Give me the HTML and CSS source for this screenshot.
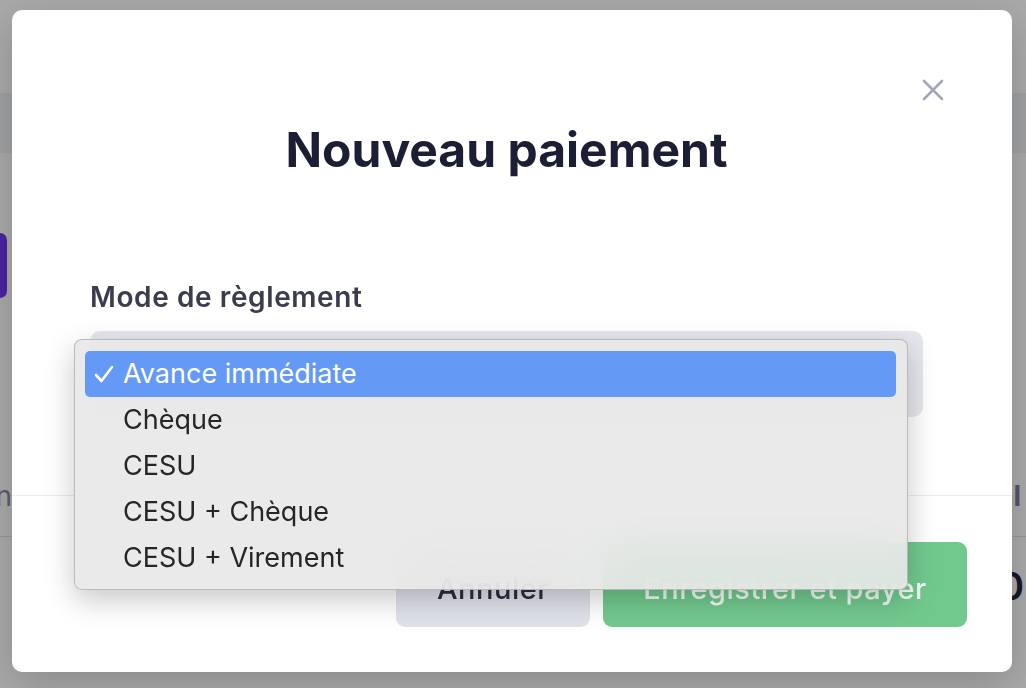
FILE: index.html
```html
<!DOCTYPE html>
<html lang="fr">

<head>
    <meta charset="UTF-8">
    <meta name="viewport" content="width=device-width, initial-scale=1.0">
    <title>Nouveau paiement</title>

    <link rel="stylesheet" href="styles.css">
</head>

<body>
    <!-- page behind the modal -->
    <div class="page">
        <div class="topbar"></div>
        <div class="band"></div>
        <div class="content">
            <div class="tab"></div>
            <div class="row head">
                <div class="cell left">Désignation</div>
                <div class="cell mid"></div>
                <div class="cell right">Total</div>
            </div>
            <div class="row">
                <div class="cell left"></div>
                <div class="cell mid"></div>
                <div class="cell right amount">100</div>
            </div>
        </div>
    </div>

    <div class="backdrop"></div>

    <div class="modal">
        <div class="modal-head">
            <button class="close" type="button" aria-label="Fermer">
                <svg width="22" height="22" viewBox="0 0 22 22">
                    <path d="M2 2 L20 20 M20 2 L2 20" stroke="#a3a7b9" stroke-width="2.6" stroke-linecap="round" fill="none" />
                </svg>
            </button>
        </div>

        <div class="modal-body">
            <h1 class="title">Nouveau paiement</h1>

            <label class="label">Mode de règlement</label>
            <div class="select-wrap">
                <div class="select"></div>

                <!-- opened native popup -->
                <ul class="popup">
                    <li class="option selected">
                        <svg class="check" width="20" height="18" viewBox="0 0 20 18">
                            <path d="M2 10 L7.5 16 L18 2" stroke="#fff" stroke-width="2.6" stroke-linecap="round" stroke-linejoin="round" fill="none" />
                        </svg>Avance immédiate
                    </li>
                    <li class="option">Chèque</li>
                    <li class="option">CESU</li>
                    <li class="option">CESU + Chèque</li>
                    <li class="option">CESU + Virement</li>
                </ul>
            </div>
        </div>

        <div class="modal-foot">
            <button class="btn btn-cancel" type="button">Annuler</button>
            <button class="btn btn-save" type="button">Enregistrer et payer</button>
        </div>
    </div>
</body>

</html>
```

FILE: styles.css
```css
* {
    padding: 0;
    margin: 0;
    box-sizing: border-box;
}

html,
body {
    height: 100%;
    overflow: hidden;
}

body {
    font-family: Inter, "Noto Sans", sans-serif;
    background: #fff;
}

/* page behind */
.page {
    height: 100%;
    background: #fff;
}

.topbar {
    height: 93px;
}

.band {
    height: 60px;
    background: #f1f2f5;
}

.content {
    padding-top: 80px;
}

.tab {
    width: 7px;
    height: 65px;
    background: #7136f2;
    border-radius: 0 10px 10px 0;
}

.row {
    display: grid;
    grid-template-columns: 12px 1fr 14px;
    height: 100px;
}

.row.head {
    margin-top: 139px;
    border-bottom: 1px solid #e2e2e8;
    align-items: center;
    padding-top: 18px;
}

.cell {
    display: flex;
    white-space: nowrap;
    overflow: hidden;
}

.cell.left {
    justify-content: flex-end;
    font-size: 28px;
    color: #8a8aa0;
}

.cell.right {
    justify-content: flex-end;
    padding-right: 5px;
    font-size: 28px;
    font-weight: 700;
    color: #80809a;
}

.cell.amount {
    padding: 26px 2px 0 0;
    font-size: 38px;
    font-weight: 600;
    color: #26263a;
}

.backdrop {
    position: fixed;
    inset: 0;
    background: rgba(0, 0, 0, 0.34);
}

/* modal */
.modal {
    position: fixed;
    top: 10px;
    left: 12px;
    width: 1000px;
    height: 662px;
    background: #fff;
    border-radius: 10px;
    box-shadow: 0 12px 40px rgba(0, 0, 0, 0.18);
    display: flex;
    flex-direction: column;
}

.modal-head {
    display: flex;
    justify-content: flex-end;
    padding: 69px 68px 0 0;
}

.close {
    display: block;
    width: 22px;
    height: 22px;
    border: 0;
    background: none;
    cursor: pointer;
}

.close svg {
    display: block;
}

.modal-body {
    padding: 21px 89px 78px 78px;
}

.title {
    font-size: 48px;
    line-height: 56px;
    font-weight: 700;
    text-align: center;
    color: #1c1f33;
}

.label {
    display: block;
    margin-top: 103px;
    font-size: 28px;
    line-height: 32px;
    letter-spacing: 0.6px;
    font-weight: 600;
    color: #3b3c4e;
}

.select-wrap {
    position: relative;
    margin-top: 18px;
}

.select {
    height: 86px;
    background: #e5e7ec;
    border-radius: 10px;
}

.popup {
    position: absolute;
    top: 8px;
    left: -16px;
    width: 834px;
    height: 251px;
    padding: 11px 11px 10px 10px;
    list-style: none;
    background: rgba(232, 232, 232, 0.9);
    backdrop-filter: blur(24px);
    border: 1px solid rgba(0, 0, 0, 0.2);
    border-radius: 8px;
    box-shadow: 0 10px 30px rgba(0, 0, 0, 0.22);
    z-index: 2;
}

.option {
    position: relative;
    height: 46px;
    padding-left: 38px;
    font-size: 27px;
    line-height: 46px;
    color: #262626;
    border-radius: 5px;
}

.option.selected {
    background: #6499f6;
    color: #fff;
}

.check {
    position: absolute;
    left: 9px;
    top: 14px;
}

.modal-foot {
    margin-top: auto;
    border-top: 1px solid #ebebf1;
    display: flex;
    justify-content: flex-end;
    gap: 13px;
    padding: 46px 45px 45px 0;
}

.btn {
    height: 85px;
    border: 0;
    border-radius: 9px;
    font-family: Inter, "Noto Sans", sans-serif;
    font-size: 29px;
    letter-spacing: 0.5px;
    font-weight: 500;
    padding-top: 8px;
    cursor: pointer;
}

.btn-cancel {
    width: 194px;
    background: #e0e2ea;
    color: #2b2d3c;
}

.btn-save {
    width: 364px;
    background: #72c98e;
    color: rgba(255, 255, 255, 0.9);
}
```
